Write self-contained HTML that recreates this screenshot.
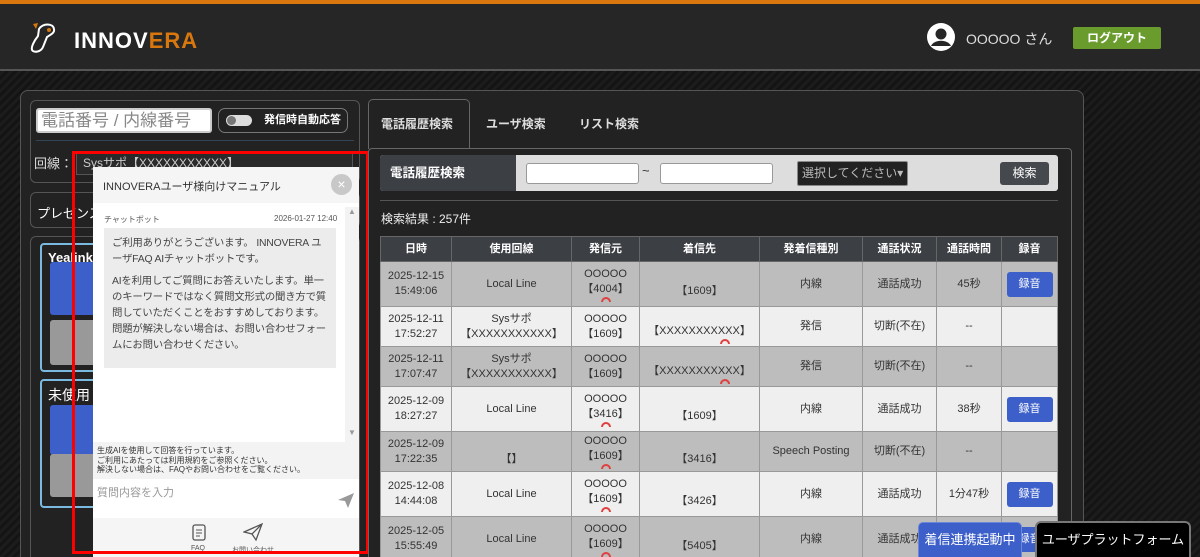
<!DOCTYPE html>
<html><head><meta charset="utf-8"><style>
*{box-sizing:border-box;margin:0;padding:0}
html,body{width:1200px;height:557px;overflow:hidden}
body{position:relative;font-family:"Liberation Sans","Noto Sans CJK JP",sans-serif;background:repeating-linear-gradient(135deg,#141414 0 3px,#1c1c1c 3px 6px);color:#fff}
.a{position:absolute}
.hdr{left:0;top:0;width:1200px;height:71px;background:#262626;border-top:4px solid #d9770f;border-bottom:2px solid #555}
.main{left:20px;top:90px;width:1064px;height:480px;background:#222;border:1px solid #555;border-radius:8px}
.box{border:1px solid #555;border-radius:6px;background:#222}
table{border-collapse:collapse;position:absolute;left:380px;top:236px;width:678px;font-size:11px;color:#333}
td,th{border:1px solid #999;text-align:center;line-height:15px}
th{background:#3c3f44;color:#fff;height:25px;font-size:11px;border-color:#666}
tr.g td{background:#bdbdbd}
tr.w td{background:#efefef}
.btn{display:inline-block;background:#3d5fc9;color:#fff;border-radius:3px;width:46px;height:25px;line-height:25px}
.arc{display:block;width:10px;height:5px;border:2px solid #e04040;border-bottom:none;border-radius:6px 6px 0 0;margin:0 auto}
</style></head><body>
<div class="a hdr"></div>
<svg class="a" style="left:28px;top:20px" width="34" height="36" viewBox="0 0 34 36"><path d="M5 4 L10 3 L8 9 Z" fill="#d9770f"/><path d="M11 9 C15 3 25 3 26 9 C27 13 22 15 19 17 L15 27 C13 32 6 33 4 30 C3 27 6 21 10 16 Z" fill="none" stroke="#fff" stroke-width="2"/><circle cx="21" cy="10" r="2" fill="#d9770f"/></svg>
<div class="a" style="left:74px;top:28px;font-size:22px;font-weight:bold;letter-spacing:1px">INNOV<span style="color:#d9770f">ERA</span></div>
<svg class="a" style="left:926px;top:22px" width="30" height="30" viewBox="0 0 30 30"><circle cx="15" cy="15" r="14" fill="#fff"/><circle cx="15" cy="12" r="5.5" fill="#262626"/><path d="M5 24 C8 17 22 17 25 24 Z" fill="#262626"/></svg>
<div class="a" style="left:966px;top:29px;font-size:14px;color:#ddd">OOOOO さん</div>
<div class="a" style="left:1073px;top:27px;width:88px;height:22px;background:#6a9c2d;border-radius:2px;font-size:12px;font-weight:bold;text-align:center;line-height:22px">ログアウト</div>

<div class="a main"></div>
<div class="a box" style="left:30px;top:100px;width:330px;height:83px"></div>
<div class="a" style="left:36px;top:108px;width:176px;height:25px;background:#fff;border-radius:3px;border:2px solid #ccc;color:#888;font-size:17px;padding-left:3px;line-height:21px">電話番号 / 内線番号</div>
<div class="a" style="left:218px;top:108px;width:130px;height:25px;border:1px solid #777;border-radius:7px;font-size:11px;font-weight:bold;line-height:23px;padding-left:45px">発信時自動応答</div>
<div class="a" style="left:226px;top:115px;width:26px;height:11px;background:#ddd;border-radius:6px"></div>
<div class="a" style="left:227px;top:116px;width:9px;height:9px;background:#777;border-radius:50%"></div>
<div class="a" style="left:36px;top:140px;width:318px;height:1px;background:#345"></div>
<div class="a" style="left:34px;top:153px;font-size:13px;color:#ddd">回線：</div>
<div class="a" style="left:76px;top:151px;width:277px;height:24px;background:#2a2a2a;border:1px solid #555;font-size:12px;color:#ccc;padding-left:6px;line-height:22px">Sysサポ【XXXXXXXXXXX】</div>
<div class="a box" style="left:30px;top:192px;width:330px;height:36px;font-size:13px;padding:10px 6px">プレゼンス</div>
<div class="a box" style="left:30px;top:236px;width:330px;height:330px"></div>
<div class="a" style="left:40px;top:243px;width:100px;height:129px;border:2px solid #7ab9e0;border-radius:4px;font-size:13px;font-weight:bold;padding:5px 6px">Yealink S</div>
<div class="a" style="left:50px;top:262px;width:60px;height:53px;background:#3d5fc9;border-radius:3px"></div>
<div class="a" style="left:50px;top:320px;width:60px;height:45px;background:#999;border-radius:3px"></div>
<div class="a" style="left:40px;top:379px;width:100px;height:129px;border:2px solid #7ab9e0;border-radius:4px;font-size:14px;padding:4px 6px">未使用</div>
<div class="a" style="left:50px;top:405px;width:60px;height:50px;background:#3d5fc9;border-radius:3px"></div>
<div class="a" style="left:50px;top:454px;width:60px;height:43px;background:#999;border-radius:3px"></div>

<!-- chat -->
<div class="a" style="left:93px;top:167px;width:266px;height:390px;background:#fff"></div>
<div class="a" style="left:93px;top:167px;width:266px;height:36px;background:#f5f5f5;color:#333;font-size:11px;padding:11px 10px">INNOVERAユーザ様向けマニュアル</div>
<div class="a" style="left:331px;top:174px;width:21px;height:21px;border-radius:50%;background:#c8c8c8;color:#fff;text-align:center;line-height:21px;font-size:14px">×</div>
<div class="a" style="left:345px;top:207px;width:14px;height:235px;background:#f3f3f3;color:#999;font-size:8px;text-align:center">▲<div style="margin-top:212px">▼</div></div>
<div class="a" style="left:104px;top:214px;font-size:8px;color:#555">チャットボット</div>
<div class="a" style="left:274px;top:214px;font-size:8px;color:#555">2026-01-27 12:40</div>
<div class="a" style="left:104px;top:228px;width:232px;height:140px;background:#ececec;color:#444;font-size:10.4px;line-height:16px;padding:8px 6px 8px 8px;letter-spacing:-0.2px">ご利用ありがとうございます。 INNOVERA ユーザFAQ AIチャットボットです。<div style="margin-top:6px">AIを利用してご質問にお答えいたします。単一のキーワードではなく質問文形式の聞き方で質問していただくことをおすすめしております。 問題が解決しない場合は、お問い合わせフォームにお問い合わせください。</div></div>
<div class="a" style="left:93px;top:442px;width:266px;height:37px;background:#f3f3f3;color:#333;font-size:8px;line-height:9.5px;padding:4px 4px">生成AIを使用して回答を行っています。<br>ご利用にあたっては利用規約をご参照ください。<br>解決しない場合は、FAQやお問い合わせをご覧ください。</div>
<div class="a" style="left:97px;top:484px;font-size:11px;color:#999">質問内容を入力</div>
<svg class="a" style="left:337px;top:491px" width="18" height="18" viewBox="0 0 18 18"><path d="M1 9 L17 2 L11 17 L8 10 Z" fill="#999"/></svg>
<div class="a" style="left:93px;top:518px;width:266px;height:39px;background:#f5f5f5"></div>
<svg class="a" style="left:191px;top:524px" width="16" height="18" viewBox="0 0 16 18"><rect x="2" y="1" width="12" height="15" rx="2" fill="none" stroke="#555" stroke-width="1.3"/><path d="M5 6h6M5 9h6M5 12h4" stroke="#555"/></svg>
<svg class="a" style="left:243px;top:523px" width="20" height="18" viewBox="0 0 20 18"><path d="M1 9 L19 1 L13 17 L9 11 Z M9 11 L19 1" fill="none" stroke="#555" stroke-width="1.3"/></svg>
<div class="a" style="left:191px;top:545px;font-size:7px;color:#555">FAQ</div>
<div class="a" style="left:232px;top:545px;font-size:7px;color:#555">お問い合わせ</div>
<div class="a" style="left:72px;top:151px;width:297px;height:403px;border:3px solid #f00"></div>

<!-- right -->
<div class="a" style="left:368px;top:99px;width:102px;height:50px;border:1px solid #666;border-bottom:none;border-radius:5px 5px 0 0;background:#222"></div>
<div class="a" style="left:381px;top:115px;font-size:12px;font-weight:bold;color:#ddd">電話履歴検索</div>
<div class="a" style="left:486px;top:115px;font-size:12px;font-weight:bold;color:#ddd">ユーザ検索</div>
<div class="a" style="left:579px;top:115px;font-size:12px;font-weight:bold;color:#ddd">リスト検索</div>
<div class="a" style="left:368px;top:148px;width:704px;height:420px;border:1px solid #666;border-radius:4px;background:#222"></div>
<div class="a" style="left:380px;top:155px;width:678px;height:36px;background:#ddd;border-radius:3px"></div>
<div class="a" style="left:380px;top:155px;width:136px;height:36px;background:#3c3f44;border-radius:3px 0 0 3px;font-size:12.5px;font-weight:bold;padding:0 10px;line-height:36px">電話履歴検索</div>
<div class="a" style="left:526px;top:163px;width:113px;height:21px;background:#fff;border:1px solid #999;border-radius:3px"></div>
<div class="a" style="left:642px;top:163px;font-size:13px;color:#333">~</div>
<div class="a" style="left:660px;top:163px;width:113px;height:21px;background:#fff;border:1px solid #999;border-radius:3px"></div>
<div class="a" style="left:797px;top:161px;width:111px;height:25px;background:#222;border:1px solid #888;border-radius:2px;font-size:12px;color:#bbb;line-height:23px;padding-left:4px">選択してください▾</div>
<div class="a" style="left:1000px;top:162px;width:49px;height:23px;background:#45484d;border-radius:3px;font-size:12px;text-align:center;line-height:23px">検索</div>
<div class="a" style="left:380px;top:200px;width:678px;height:1px;background:#555"></div>
<div class="a" style="left:381px;top:210px;font-size:12px;color:#eee">検索結果 : 257件</div>
<table>
<tr><th style="width:71px">日時</th><th style="width:120px">使用回線</th><th style="width:68px">発信元</th><th style="width:120px">着信先</th><th style="width:103px">発着信種別</th><th style="width:74px">通話状況</th><th style="width:65px">通話時間</th><th>録音</th></tr>
<tr class="g" style="height:45px"><td>2025-12-15<br>15:49:06</td><td>Local Line</td><td>OOOOO<br>【4004】<span class="arc"></span></td><td><br>【1609】</td><td>内線</td><td>通話成功</td><td>45秒</td><td><span class="btn">録音</span></td></tr>
<tr class="w" style="height:40px"><td>2025-12-11<br>17:52:27</td><td>Sysサポ<br>【XXXXXXXXXXX】</td><td>OOOOO<br>【1609】</td><td><br>【XXXXXXXXXXX】<span class="arc" style="margin-left:80px"></span></td><td>発信</td><td>切断(不在)</td><td>--</td><td></td></tr>
<tr class="g" style="height:40px"><td>2025-12-11<br>17:07:47</td><td>Sysサポ<br>【XXXXXXXXXXX】</td><td>OOOOO<br>【1609】</td><td><br>【XXXXXXXXXXX】<span class="arc" style="margin-left:80px"></span></td><td>発信</td><td>切断(不在)</td><td>--</td><td></td></tr>
<tr class="w" style="height:45px"><td>2025-12-09<br>18:27:27</td><td>Local Line</td><td>OOOOO<br>【3416】<span class="arc"></span></td><td><br>【1609】</td><td>内線</td><td>通話成功</td><td>38秒</td><td><span class="btn">録音</span></td></tr>
<tr class="g" style="height:40px"><td>2025-12-09<br>17:22:35</td><td><br>【】</td><td>OOOOO<br>【1609】<span class="arc"></span></td><td><br>【3416】</td><td>Speech Posting</td><td>切断(不在)</td><td>--</td><td></td></tr>
<tr class="w" style="height:45px"><td>2025-12-08<br>14:44:08</td><td>Local Line</td><td>OOOOO<br>【1609】<span class="arc"></span></td><td><br>【3426】</td><td>内線</td><td>通話成功</td><td>1分47秒</td><td><span class="btn">録音</span></td></tr>
<tr class="g" style="height:45px"><td>2025-12-05<br>15:55:49</td><td>Local Line</td><td>OOOOO<br>【1609】<span class="arc"></span></td><td><br>【5405】</td><td>内線</td><td>通話成功</td><td></td><td><span class="btn">録音</span></td></tr>
</table>
<div class="a" style="left:918px;top:522px;width:104px;height:40px;background:#3d5fc9;border-radius:5px 5px 0 0;font-size:13px;text-align:center;line-height:34px;border:1px solid #6a86d8">着信連携起動中</div>
<div class="a" style="left:1035px;top:521px;width:156px;height:42px;background:#000;border:2px solid #777;border-radius:6px 6px 0 0;font-size:13px;text-align:center;line-height:34px">ユーザプラットフォーム</div>
</body></html>
